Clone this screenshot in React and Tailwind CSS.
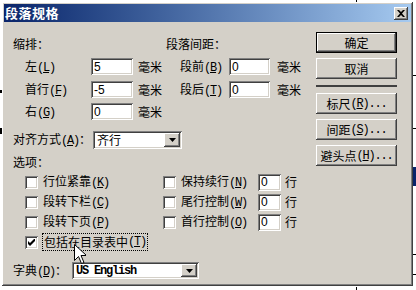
import React from "react";

const raised =
  "shadow-[inset_-1px_-1px_#404040,inset_1px_1px_#ffffff,inset_-2px_-2px_#808080,inset_2px_2px_#d4d0c8] bg-[#d4d0c8]";
const sunken =
  "shadow-[inset_1px_1px_#808080,inset_-1px_-1px_#ffffff,inset_2px_2px_#404040,inset_-2px_-2px_#d4d0c8] bg-white";

function Key({ k }) {
  return (
    <span className="font-['Liberation_Mono',monospace] text-[12px] tracking-[-1.2px]">
      (<span className="underline">{k}</span>)
    </span>
  );
}

function Dots() {
  return <span className="font-['Liberation_Mono',monospace] text-[12px] tracking-[-1.2px]">...</span>;
}

function Field({ value, w }) {
  return (
    <div className={`${sunken} h-[17px] flex items-center pl-[3px] text-[12px] font-['Liberation_Sans',sans-serif]`} style={{ width: w }}>
      {value}
    </div>
  );
}

function Arrow() {
  return (
    <div className={`${raised} w-[16px] h-full flex items-center justify-center`}>
      <svg width="7" height="4" viewBox="0 0 7 4">
        <path d="M0 0h7L3.5 4z" fill="#000" />
      </svg>
    </div>
  );
}

function Check({ checked }) {
  return (
    <div className={`${sunken} w-[13px] h-[13px] flex items-center justify-center shrink-0`}>
      {checked && (
        <svg width="7" height="7" viewBox="0 0 7 7">
          <path d="M0 2v3l2 2 5-5V-1L2 4z" fill="#000" />
        </svg>
      )}
    </div>
  );
}

function Btn({ children, def }) {
  const face = (
    <div className={`${raised} w-full h-full flex items-center justify-center text-[12px]`}>{children}</div>
  );
  return def ? (
    <div className="w-[81px] h-[21px] border border-black">{face}</div>
  ) : (
    <div className="w-[81px] h-[21px]">{face}</div>
  );
}

function SpacingRow({ left, lk, lv, right, rk, rv }) {
  return (
    <div className="h-[17px] flex items-center">
      <span className="w-[66px] ml-[21px]">
        {left}
        <Key k={lk} />
      </span>
      <Field value={lv} w={42} />
      <span className="w-[42px] ml-[5px]">毫米</span>
      {right && (
        <>
          <span className="w-[49px]">
            {right}
            <Key k={rk} />
          </span>
          <Field value={rv} w={41} />
          <span className="ml-[7px]">毫米</span>
        </>
      )}
    </div>
  );
}

function OptRow({ l, lk, checked, focus, r, rk }) {
  return (
    <div className="h-[20px] flex items-center">
      <div className="w-[138px] ml-[21px] flex items-center">
        <Check checked={checked} />
        {focus ? (
          <span className="ml-[4px] h-[18px] px-[1px] flex items-center border border-dotted border-black">
            {l}
            <Key k={lk} />
          </span>
        ) : (
          <span className="ml-[5px]">
            {l}
            <Key k={lk} />
          </span>
        )}
      </div>
      {r && (
        <div className="flex items-center">
          <Check />
          <span className="ml-[5px] w-[77px]">
            {r}
            <Key k={rk} />
          </span>
          <Field value="0" w={23} />
          <span className="ml-[4px]">行</span>
        </div>
      )}
    </div>
  );
}

export default function App() {
  return (
    <div className="relative w-[416px] h-[290px] bg-white overflow-hidden font-['Noto_Sans_CJK_SC',sans-serif] text-[12px] leading-[14px] text-black">
      {/* document behind the dialog */}
      <div className="absolute left-[356px] top-0 w-px h-[2px] bg-black" />
      <div className="absolute left-[356px] top-[287px] w-px h-[3px] bg-black" />
      <div className="absolute left-[413px] top-[75px] w-[3px] h-px bg-black" />
      <div className="absolute left-[413px] top-[128px] w-[3px] h-px bg-black" />
      <div className="absolute left-[413px] top-[167px] w-[3px] h-[19px] bg-[#0a246a]" />
      <div className="absolute left-[413px] top-[254px] w-[3px] h-px bg-black" />
      <div className="absolute left-[413px] top-[274px] w-[3px] h-px bg-black" />
      <div className="absolute left-0 top-[90px] w-[2px] h-[3px] bg-black" />
      <div className="absolute left-0 top-[128px] w-[2px] h-[6px] bg-black" />

      <div className="ml-[2px] mt-[2px] w-[411px] h-[284px] p-[2px] bg-[#d4d0c8] shadow-[inset_-1px_-1px_#404040,inset_1px_1px_#ffffff,inset_-2px_-2px_#808080]">
        {/* title bar */}
        <div className="h-[18px] flex items-center justify-between bg-gradient-to-r from-[#0a246a] to-[#a6caf0] pl-[1px] pr-[3px]">
          <span className="text-white font-bold text-[13px] tracking-[0.5px]">段落规格</span>
          <div className={`${raised} w-[14px] h-[13px] flex items-center justify-center`}>
            <svg width="8" height="7" viewBox="0 0 8 7">
              <path d="M0 0h2l2 2 2-2h2L5 3.5 8 7H6L4 5 2 7H0l3-3.5z" fill="#000" />
            </svg>
          </div>
        </div>

        <div className="flex">
          {/* left area */}
          <div className="w-[312px] flex flex-col">
            <div className="h-[16px] mt-[14px] flex items-center">
              <span className="w-[153px] ml-[9px]">缩排：</span>
              <span>段落间距：</span>
            </div>
            <div className="mt-[6px]">
              <SpacingRow left="左" lk="L" lv="5" right="段前" rk="B" rv="0" />
            </div>
            <div className="mt-[6px]">
              <SpacingRow left="首行" lk="F" lv="-5" right="段后" rk="T" rv="0" />
            </div>
            <div className="mt-[5px]">
              <SpacingRow left="右" lk="G" lv="0" />
            </div>

            <div className="h-[18px] mt-[11px] flex items-center">
              <span className="w-[80px] ml-[9px]">
                对齐方式
                <Key k="A" />：
              </span>
              <div className={`${sunken} w-[89px] h-[18px] flex items-center justify-between p-[2px]`}>
                <span className="pl-[2px]">齐行</span>
                <Arrow />
              </div>
            </div>

            <div className="h-[16px] mt-[5px] flex items-center">
              <span className="ml-[9px]">选项：</span>
            </div>

            <div className="mt-[2px] flex flex-col">
              <OptRow l="行位紧靠" lk="K" r="保持续行" rk="N" />
              <OptRow l="段转下栏" lk="C" r="尾行控制" rk="W" />
              <OptRow l="段转下页" lk="P" r="首行控制" rk="O" />
              <OptRow l="包括在目录表中" lk="T" checked focus />
            </div>

            <div className="h-[17px] mt-[10px] flex items-center">
              <span className="w-[59px] ml-[9px]">
                字典
                <Key k="D" />：
              </span>
              <div className={`${sunken} w-[127px] h-[17px] flex items-center justify-between p-[2px]`}>
                <span className="pl-[2px] font-['Liberation_Mono',monospace] text-[12px] tracking-[-1.2px] font-bold">
                  US English
                </span>
                <Arrow />
              </div>
            </div>
          </div>

          {/* buttons */}
          <div className="flex flex-col">
            <div className="mt-[10px]">
              <Btn def>确定</Btn>
            </div>
            <div className="mt-[5px]">
              <Btn>取消</Btn>
            </div>
            <div className="mt-[6px] w-[81px] h-[2px] bg-[#404040]" />
            <div className="mt-[6px]">
              <Btn>
                标尺
                <Key k="R" />
                <Dots />
              </Btn>
            </div>
            <div className="mt-[5px]">
              <Btn>
                间距
                <Key k="S" />
                <Dots />
              </Btn>
            </div>
            <div className="mt-[5px]">
              <Btn>
                避头点
                <Key k="H" />
                <Dots />
              </Btn>
            </div>
          </div>
        </div>
      </div>

      {/* mouse cursor */}
      <svg className="absolute left-[74px] top-[244px]" width="12" height="21" viewBox="0 0 12 21">
        <path d="M0.5 0.5v16l4-4 3 7 2.5-1-3-7h5.5z" fill="#fff" stroke="#000" strokeWidth="1" />
      </svg>
    </div>
  );
}
